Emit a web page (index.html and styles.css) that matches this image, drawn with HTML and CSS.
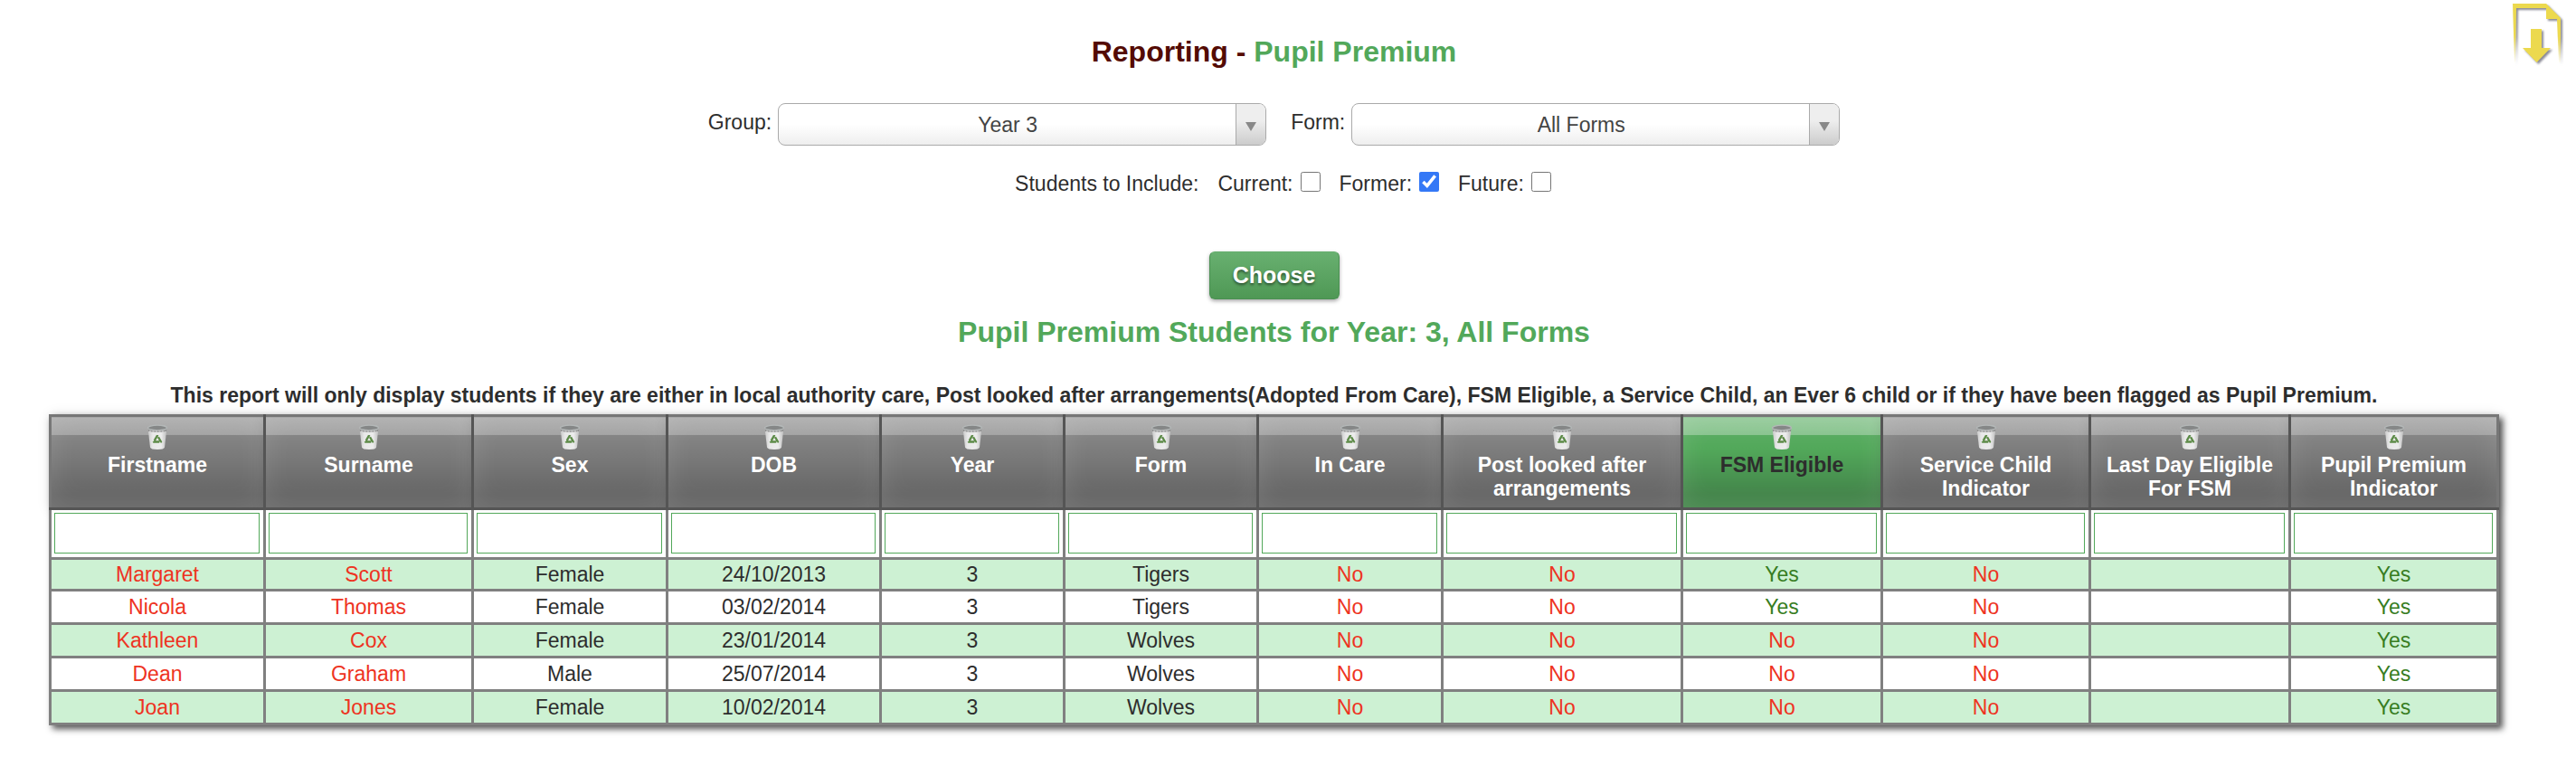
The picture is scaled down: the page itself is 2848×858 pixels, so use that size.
FILE: index.html
```
<!DOCTYPE html>
<html lang="en">
<head>
<meta charset="utf-8">
<title>Reporting - Pupil Premium</title>
<link rel="stylesheet" href="styles.css">
</head>
<body>
<svg class="defs" width="0" height="0" aria-hidden="true">
  <defs>
    <linearGradient id="bin-body" x1="0" x2="1" y1="0" y2="0">
      <stop offset="0" stop-color="#c8c8c8"/><stop offset=".25" stop-color="#e8e8e8"/>
      <stop offset=".7" stop-color="#ececec"/><stop offset="1" stop-color="#bdbdbd"/>
    </linearGradient>
    <linearGradient id="page-fade" x1="0" x2="0" y1="0" y2="1">
      <stop offset=".55" stop-color="#ecd94e"/><stop offset="1" stop-color="#ecd94e" stop-opacity="0"/>
    </linearGradient>
    <symbol id="bin" viewBox="0 0 24 28">
      <path d="M1.500 4 4 25.500Q4.500 28 12 28T20 25.500L22.500 4Z" fill="url(#bin-body)"/>
      <path d="M1.500 4h21l-.5 4Q12 10 2 8Z" fill="#777" opacity=".7"/>
      <ellipse cx="12" cy="4" rx="10.500" ry="2.800" fill="#858787" stroke="#b4b8b8" stroke-width="1.300"/>
      <path d="M3 8h18" stroke="#ddd" stroke-width="1" stroke-dasharray="2 1.500"/>
      <path d="M12 12.500 16 19.500H8Z" fill="none" stroke="#5d8b48" stroke-width="2.400" stroke-linejoin="round" stroke-dasharray="6.500 1.300" stroke-dashoffset="-2"/>
    </symbol>
  </defs>
</svg>

<a class="export" href="#" aria-label="Download report">
  <svg viewBox="0 0 58 74" width="58" height="74">
    <path d="M1 4H38L54 20V70H52L50 21H38V9H5L4 70H3Z" fill="url(#page-fade)"/>
    <path d="M21 32H33V53H43L27.500 69 12 53H21Z" fill="#ecd94e"/>
  </svg>
</a>

<main class="page">
  <h1 class="title">Reporting - <span class="accent">Pupil Premium</span></h1>

  <form class="filters">
    <div class="pickers">
      <label for="group">Group:</label>
      <span class="picker"><select id="group"><option>Year 3</option></select></span>
      <label class="second" for="form">Form:</label>
      <span class="picker"><select id="form"><option>All Forms</option></select></span>
    </div>
    <div class="include">
      <span>Students to Include:</span>
      <label>Current: <input type="checkbox"></label>
      <label>Former: <input type="checkbox" checked></label>
      <label>Future: <input type="checkbox"></label>
    </div>
    <button class="choose" type="button">Choose</button>
  </form>

  <h2 class="subtitle">Pupil Premium Students for Year: 3, All Forms</h2>
  <p class="notice">This report will only display students if they are either in local authority care, Post looked after arrangements(Adopted From Care), FSM Eligible, a Service Child, an Ever 6 child or if they have been flagged as Pupil Premium.</p>

  <table class="report">
    <colgroup>
      <col style="width:237px"><col style="width:230px"><col style="width:215px"><col style="width:236px">
      <col style="width:203px"><col style="width:214px"><col style="width:204px"><col style="width:265px">
      <col style="width:221px"><col style="width:230px"><col style="width:221px"><col style="width:230px">
    </colgroup>
    <thead>
      <tr class="heads">
        <th><svg class="bin"><use href="#bin"/></svg>Firstname</th>
        <th><svg class="bin"><use href="#bin"/></svg>Surname</th>
        <th><svg class="bin"><use href="#bin"/></svg>Sex</th>
        <th><svg class="bin"><use href="#bin"/></svg>DOB</th>
        <th><svg class="bin"><use href="#bin"/></svg>Year</th>
        <th><svg class="bin"><use href="#bin"/></svg>Form</th>
        <th><svg class="bin"><use href="#bin"/></svg>In Care</th>
        <th><svg class="bin"><use href="#bin"/></svg>Post looked after arrangements</th>
        <th class="sorted"><svg class="bin"><use href="#bin"/></svg>FSM Eligible</th>
        <th><svg class="bin"><use href="#bin"/></svg>Service Child Indicator</th>
        <th><svg class="bin"><use href="#bin"/></svg>Last Day Eligible For FSM</th>
        <th><svg class="bin"><use href="#bin"/></svg>Pupil Premium Indicator</th>
      </tr>
      <tr class="search">
        <td><input type="text" aria-label="Firstname"></td>
        <td><input type="text" aria-label="Surname"></td>
        <td><input type="text" aria-label="Sex"></td>
        <td><input type="text" aria-label="DOB"></td>
        <td><input type="text" aria-label="Year"></td>
        <td><input type="text" aria-label="Form"></td>
        <td><input type="text" aria-label="In Care"></td>
        <td><input type="text" aria-label="Post looked after arrangements"></td>
        <td><input type="text" aria-label="FSM Eligible"></td>
        <td><input type="text" aria-label="Service Child Indicator"></td>
        <td><input type="text" aria-label="Last Day Eligible For FSM"></td>
        <td><input type="text" aria-label="Pupil Premium Indicator"></td>
      </tr>
    </thead>
    <tbody>
      <tr><td class="no">Margaret</td><td class="no">Scott</td><td>Female</td><td>24/10/2013</td><td>3</td><td>Tigers</td><td class="no">No</td><td class="no">No</td><td class="yes">Yes</td><td class="no">No</td><td></td><td class="yes">Yes</td></tr>
      <tr><td class="no">Nicola</td><td class="no">Thomas</td><td>Female</td><td>03/02/2014</td><td>3</td><td>Tigers</td><td class="no">No</td><td class="no">No</td><td class="yes">Yes</td><td class="no">No</td><td></td><td class="yes">Yes</td></tr>
      <tr><td class="no">Kathleen</td><td class="no">Cox</td><td>Female</td><td>23/01/2014</td><td>3</td><td>Wolves</td><td class="no">No</td><td class="no">No</td><td class="no">No</td><td class="no">No</td><td></td><td class="yes">Yes</td></tr>
      <tr><td class="no">Dean</td><td class="no">Graham</td><td>Male</td><td>25/07/2014</td><td>3</td><td>Wolves</td><td class="no">No</td><td class="no">No</td><td class="no">No</td><td class="no">No</td><td></td><td class="yes">Yes</td></tr>
      <tr><td class="no">Joan</td><td class="no">Jones</td><td>Female</td><td>10/02/2014</td><td>3</td><td>Wolves</td><td class="no">No</td><td class="no">No</td><td class="no">No</td><td class="no">No</td><td></td><td class="yes">Yes</td></tr>
    </tbody>
  </table>
</main>
</body>
</html>
```
FILE: styles.css
```
* { box-sizing: border-box; }
body {
  margin: 0;
  background: #fff;
  color: #2d2d2d;
  font: 23px/26px "Liberation Sans", Arial, Helvetica, sans-serif;
  text-align: center;
}
.defs { position: absolute; }
.export { position: absolute; top: 0; right: 13px; filter: drop-shadow(2px 2px 1px rgba(60, 60, 80, .6)); }
.export svg { display: block; }
.page { padding: 36px 85px 40px 54px; }
.title { margin: 0; font-size: 32px; line-height: 42px; color: #540b04; }
.accent { color: #52a85a; }
.filters { display: flex; flex-direction: column; align-items: center; }
.pickers { display: flex; gap: 7px; margin-top: 36px; }
.pickers label { padding-top: 8px; }
.pickers .second { margin-left: 20px; }
.picker { position: relative; width: 540px; }
.picker::before {
  content: "";
  position: absolute;
  inset: 1px 1px 1px auto;
  width: 32px;
  border-left: 1px solid #aaa;
  border-radius: 0 7px 7px 0;
  background: linear-gradient(#eee 40%, #ccc);
  pointer-events: none;
}
.picker::after {
  content: "";
  position: absolute;
  top: 21px;
  right: 11px;
  border: 6px solid transparent;
  border-top: 10px solid #888;
  border-bottom: 0;
  pointer-events: none;
}
.picker select {
  display: block;
  width: 100%;
  height: 47px;
  padding: 0 32px 0 0;
  border: 1px solid #aaa;
  border-radius: 8px;
  background: linear-gradient(#fff 50%, #eee);
  color: #444;
  font: inherit;
  text-align: center;
  text-align-last: center;
  appearance: none;
}
.include { display: flex; gap: 21px; margin: 29px 0 0 20px; }
.include label { display: flex; align-items: flex-start; gap: 8px; }
.include input { width: 22px; height: 22px; margin: 0; accent-color: #3478f6; }
.choose {
  width: 144px;
  height: 53px;
  margin-top: 62px;
  padding: 0 0 2px;
  border: 1px solid #4a8f52;
  border-top-color: #68b070;
  border-radius: 6px;
  background: linear-gradient(#68b070, #4f9855);
  box-shadow: 0 2px 4px rgba(0, 0, 0, .35);
  color: #fff;
  font: bold 25px/30px "Liberation Sans", Arial, sans-serif;
  text-shadow: 0 2px 3px rgba(0, 0, 0, .5);
}
.subtitle { margin: 15px 0 0; font-size: 32px; line-height: 42px; color: #52a85a; }
.notice { margin: 36px 0 8px; font-weight: bold; }
.report {
  width: 100%;
  table-layout: fixed;
  border-collapse: collapse;
  box-shadow: 4px 4px 7px #555;
}
.report th, .report td { padding: 0; border: 3px solid #808080; }
.report .heads th {
  height: 103px;
  padding: 8px 6px 0;
  border-color: #777 #555 #555 #777;
  vertical-align: top;
  color: #fff;
  background:
    linear-gradient(rgba(255, 255, 255, .3), rgba(255, 255, 255, .25)) top / 100% 20px no-repeat,
    linear-gradient(#8e8e8e, #666 85%);
  box-shadow: inset 0 0 30px rgba(255, 255, 255, .12), 0 0 14px rgba(0, 0, 0, .15);
}
.report .heads th:last-child { border-right-color: #777; }
.report .heads .sorted {
  color: #2d2d2d;
  background:
    linear-gradient(rgba(255, 255, 255, .35), rgba(255, 255, 255, .3)) top / 100% 20px no-repeat,
    linear-gradient(#5fb067, #52a85a 35%, #43854a 85%);
}
.bin { display: block; width: 24px; height: 28px; margin: 0 auto 4px; }
.report .search td { height: 55px; padding: 3px 4px 4px 3px; background: #fff; }
.search input { display: block; width: 100%; height: 45px; border: 1px solid #52a85a; background: #fff; font: inherit; }
.report tbody td { height: 37px; background: #fff; }
.report tbody tr:first-child td { height: 35px; }
.report tbody tr:nth-child(odd) td { background: #cdf1d3; }
.report .no { color: #ee3322; }
.report .yes { color: #377d22; }
```
